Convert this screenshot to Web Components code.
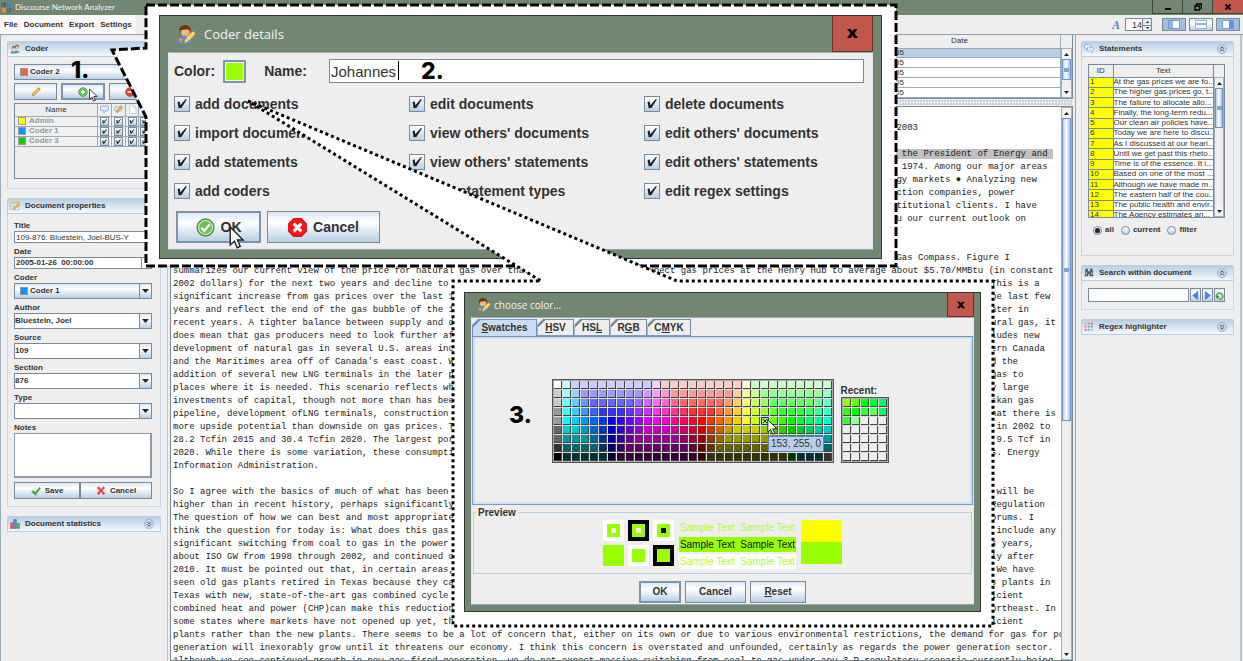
<!DOCTYPE html>
<html lang="en">
<head>
<meta charset="utf-8">
<title>Discourse Network Analyzer</title>
<style>
html, body { margin: 0; height: 100%; overflow: hidden; }
body { font: 8px/10px "Liberation Sans", Arial, sans-serif; color: #333; background: #eee; }
</style>
</head>
<body>
<dna-app></dna-app>

<script>
const BASE = `
  *, *::before, *::after { box-sizing: border-box; }
  button, input, select, textarea { font: inherit; color: inherit; margin: 0; border-radius: 0; outline: none; }
  svg { display: block; flex: none; }
  input[type=checkbox] { appearance: none; flex: none; position: relative; border: 1px solid #7a8a99; background: linear-gradient(#fff, #b8cfe5); }
  input[type=checkbox]:checked::before { content: ""; position: absolute; inset: 0; background: #222;
    clip-path: polygon(18% 40%, 34% 36%, 38% 62%, 76% 20%, 86% 20%, 46% 82%, 26% 84%); }
`;

function define(name, css, html, setup) {
  const template = document.createElement("template");
  template.innerHTML = `<style>${BASE}${css}</style>${html}`;
  customElements.define(name, class extends HTMLElement {
    constructor() {
      super();
      this.attachShadow({ mode: "open" }).append(template.content.cloneNode(true));
    }
    connectedCallback() { if (setup) setup.call(this, this.shadowRoot); }
  });
}

/* ---------- icons ---------- */
const ICONS = {
  logo: `<rect x="1" y="1" width="6" height="6" fill="#46596a"/><rect x="9" y="1" width="6" height="6" fill="#2f7fd0"/><rect x="1" y="9" width="6" height="6" fill="#f08a1c"/><rect x="9" y="9" width="6" height="6" fill="#55606b"/><path d="M3 2v4M11 3h3M10 10l4 4M3 12h3" stroke="#8fa6b8"/>`,
  people: `<circle cx="11" cy="4" r="3" fill="#8a5a2b"/><circle cx="11" cy="5" r="2" fill="#f3c592"/><path d="M7 14c0-5 8-5 8 0z" fill="#5fae4b"/><circle cx="6" cy="6" r="3" fill="#7a4a20"/><circle cx="6" cy="7.500" r="2.200" fill="#f6cd9d"/><path d="M1 15c0-6 10-6 10 0z" fill="#4d8fd8"/><path d="M5 10l1 4 1.500-4z" fill="#fff"/>`,
  coder: `<path d="M2 4c0-5 9-5 10 0l-1 3H3z" fill="#7b4317"/><circle cx="7" cy="6" r="3.600" fill="#f4b57e"/><path d="M2 4c2 1 6-1 8 0l1-1c-1-4-8-4-9 1z" fill="#6b3711"/><path d="M1 15c-1-7 10-8 12-2l-2 3H4z" fill="#4a90dd"/><path d="M1 13l3 2 1-3-3-1z" fill="#f08a3c"/><path d="M6 15.500l1.500-5L13.500 5l2.300 2.300L9.500 14z" fill="#f7d879" stroke="#c58a28" stroke-width=".8"/><path d="M6 15.500l1.500-5 2 3z" fill="#fff0d0" stroke="#a86c20" stroke-width=".5"/>`,
  pencil: `<path d="M2 14l1.500-5L12 1l3 3-8.500 8z" fill="#f8c34a" stroke="#c97f1c"/><path d="M2 14l1.500-5 3 3z" fill="#fbe6c0" stroke="#a0671c" stroke-width=".7"/><path d="M12 1l3 3-1.500 1.500-3-3z" fill="#e79a5a"/>`,
  add: `<circle cx="8" cy="8" r="7" fill="#4fae46" stroke="#2f8a33"/><circle cx="8" cy="8" r="5.600" fill="none" stroke="#a9dca0"/><path d="M8 4.500v7M4.500 8h7" stroke="#fff" stroke-width="2.200"/>`,
  remove: `<circle cx="8" cy="8" r="7" fill="#e0413a" stroke="#b52a24"/><path d="M4 8h8" stroke="#fff" stroke-width="2.400"/>`,
  bubble: `<path d="M3 2h10q2 0 2 2v4q0 2-2 2h-3l-3 4v-4H3q-2 0-2-2V4q0-2 2-2z" fill="#e3effc" stroke="#6d9fd8" stroke-width="1.400"/>`,
  bubbles: `<path d="M2 1h7q1.500 0 1.500 1.500v3Q10.500 7 9 7H6L4 10V7H2Q1 7 1 5.500v-3Q1 1 2 1z" fill="#f4f9ff" stroke="#6d9fd8"/><path d="M7 5h6q2 0 2 1.500v3q0 1.500-2 1.500v3l-3-3H7q-1.500 0-1.500-1.500v-3Q5.500 5 7 5z" fill="#e3effc" stroke="#6d9fd8"/>`,
  bubbleEdit: `<path d="M3 3h9q2 0 2 2v4q0 2-2 2H9l-3 3v-3H3q-2 0-2-2V5q0-2 2-2z" fill="#e3effc" stroke="#6d9fd8" stroke-width="1.200"/><path d="M4 13l1-4 8-8 2.500 2.500-8 8z" fill="#f5ae3d" stroke="#b9771c" stroke-width=".8"/>`,
  page: `<path d="M3 1h7l4 4v10H3z" fill="#fff" stroke="#b4b4b4"/><path d="M10 1v4h4" fill="#eee" stroke="#b4b4b4"/>`,
  note: `<path d="M1 2h13v12H1z" fill="#f4f8fb" stroke="#8fa9bf"/><path d="M1 2h13v3H1z" fill="#f2c24f"/><path d="M3 7h8M3 9h6M3 11h5" stroke="#9ab4c9"/><path d="M6 13l1-3 7-6 1.500 2-7 6z" fill="#f5b53d" stroke="#b47c1c" stroke-width=".7"/>`,
  bars: `<path d="M1 6h4v9H1z" fill="#f05d63" stroke="#c93a42"/><path d="M6 1h4v14H6z" fill="#5a92e8" stroke="#2d62b8"/><path d="M11 7h4v8h-4z" fill="#62b562" stroke="#3b8a3f"/>`,
  binoculars: `<path d="M2 3h4v2h4V3h4l1 10H9V9H7v4H1z" fill="#4d5357"/><path d="M3 1h3v2H3zM10 1h3v2h-3z" fill="#2d3133"/><path d="M3 6h2v5H2zM11 6h2l1 5h-2z" fill="#a8b2b8"/>`,
  dots: `<path d="M1 1h3v3H1z" fill="#e6b53c"/><path d="M6 1h3v3H6z" fill="#f07c7c"/><path d="M11 1h3v3h-3z" fill="#ef5b5b"/><path d="M1 6h3v3H1z" fill="#f07c9c"/><path d="M6 6h3v3H6z" fill="#6cc16c"/><path d="M11 6h3v3h-3z" fill="#4dbd7c"/><path d="M1 11h3v3H1z" fill="#ee5b5b"/><path d="M6 11h3v3H6z" fill="#62a3ee"/><path d="M11 11h3v3h-3z" fill="#c79bea"/>`,
  tick: `<path d="M1 9l3-2 3 3 7-8 1 2-8 11z" fill="#4fae46" stroke="#2f8a33" stroke-width=".8"/>`,
  cross: `<path d="M2 3l2-2 4 4 4-4 2 2-4 4 4 5-2 2-4-5-4 5-2-2 4-5z" fill="#f04848" stroke="#c92a2a" stroke-width=".8"/>`,
  accept: `<circle cx="8" cy="8" r="7.300" fill="#4ea545" stroke="#3c9038" stroke-width=".8"/><circle cx="8" cy="8" r="5.900" fill="#6dbd5e" stroke="#d6f0cf" stroke-width=".9"/><path d="M4.500 8.200l2.500 2.600 4.500-5.300" fill="none" stroke="#fff" stroke-width="1.900"/>`,
  stop: `<path d="M4.800.6h6.400l4.200 4.200v6.400l-4.200 4.200H4.800L.6 11.200V4.800z" fill="#fb1616" stroke="#e00d0d"/><path d="M4.800 4.800l6.400 6.400M11.200 4.800l-6.400 6.400" stroke="#fff" stroke-width="2.600"/>`,
  prev: `<path d="M12 1v14L3 8z" fill="#3f83e6" stroke="#2a63c0"/>`,
  next: `<path d="M4 1v14l9-7z" fill="#3f83e6" stroke="#2a63c0"/>`,
  refresh: `<path d="M3 11a5.500 5.500 0 1 1 4 3.500" fill="none" stroke="#58b04c" stroke-width="3"/><path d="M1 8l7 1-4 6z" fill="#3f9438"/>`,
  down: `<circle cx="8" cy="8" r="7.300" fill="#c3d6ea" stroke="#8da3ba"/><path d="M5 4.500l3 3 3-3M5 8.500l3 3 3-3" fill="none" stroke="#333" stroke-width="1.400"/>`,
  up: `<circle cx="8" cy="8" r="7.300" fill="#c3d6ea" stroke="#8da3ba"/><path d="M5 7.500l3-3 3 3M5 11.500l3-3 3 3" fill="none" stroke="#333" stroke-width="1.400"/>`,
};
define("ui-icon", `:host { display: block; flex: none; width: 10px; height: 10px; } svg { width: 100%; height: 100%; }`,
  `<svg viewBox="0 0 16 16"></svg>`,
  function (root) { root.querySelector("svg").innerHTML = ICONS[this.getAttribute("name")]; });

/* ---------- small controls ---------- */
define("ui-button", `
  :host { display: flex; }
  button { flex: 1; display: flex; align-items: center; justify-content: center; gap: var(--gap, 4px); padding: 0; min-width: 0;
    border: 1px solid #7a8a99; background: linear-gradient(#dde8f3, #fff 35%, #b8cfe5); font-weight: bold; }
  :host([focus]) button { border-width: 2px; border-color: #7d94b0; }
`, `<button type="button"><slot></slot></button>`,
  function (root) { if (this.title) root.querySelector("button").setAttribute("aria-label", this.title); });

define("ui-combo", `
  :host { display: flex; flex-direction: column; }
  label { font-weight: bold; line-height: 10px; }
  .box { display: flex; align-items: center; height: 16px; border: 1px solid #7a8a99; background: #fff; }
  :host([color]) .box { background: linear-gradient(#dde8f3, #fff 35%, #b8cfe5); }
  i { display: none; width: 8px; height: 8px; margin-left: 5px; background: var(--c); border: 1px solid #8899a8; }
  :host([color]) i { display: block; }
  select { flex: 1; min-width: 0; height: 100%; appearance: none; border: 0; padding: 0; background: none; font-weight: bold; }
  :host([color]) select { padding-left: 2px; }
  .arrow { width: 12px; height: 100%; border-left: 1px solid #7a8a99; background: linear-gradient(#dde8f3, #fff 35%, #b8cfe5); display: grid; place-items: center; }
`, `<label for="s"></label><div class="box"><i></i><select id="s"><option></option></select>
   <span class="arrow"><svg width="7" height="4"><path d="M0 0h7L3.500 4z" fill="#222"/></svg></span></div>`,
  function (root) {
    const label = root.querySelector("label");
    if (this.hasAttribute("label")) label.textContent = this.getAttribute("label"); else label.remove();
    root.querySelector("option").textContent = this.getAttribute("value") || "";
    if (!label.isConnected) root.querySelector("select").setAttribute("aria-label", "Active coder");
    if (this.hasAttribute("color")) this.style.setProperty("--c", this.getAttribute("color"));
  });

define("ui-scrollbar", `
  :host { display: flex; flex-direction: column; width: 11px; border: 1px solid #9fb0c0; background: #eee; }
  .b { height: 10px; flex: none; display: grid; place-items: center; background: #f2f2f2; }
  .t { flex: none; height: var(--thumb, 20px); border: 1px solid #6f93c8; background: linear-gradient(90deg, #b8cfe5, #fff 45%, #a9c4e4); display: grid; place-items: center; }
  .t i { width: 5px; height: 4px; background: #7ea4d8; }
  .s { flex: 1; }
`, `<div class="b"><svg width="5" height="3"><path d="M0 3h5L2.500 0z" fill="#222"/></svg></div>
   <div class="t"><i></i></div><div class="s"></div>
   <div class="b"><svg width="5" height="3"><path d="M0 0h5L2.500 3z" fill="#222"/></svg></div>`);

define("task-pane", `
  :host { display: block; }
  header { display: flex; align-items: center; gap: 5px; height: 16px; padding: 0 6px 0 2px; border: 1px solid #b8cfe5;
    background: linear-gradient(#b8cfe5, #f4f8fb); border-radius: 2px 2px 0 0; font-weight: bold; }
  h2 { flex: 1; margin: 0; font-size: 8px; }
  .body { border: 1px solid #c6d8ea; border-top: 0; padding: 7px 8px 7px 6px; }
  :host([closed]) .body { display: none; }
`, `<header><span class="i"></span><h2></h2><span class="t"></span></header><div class="body"><slot></slot></div>`,
  function (root) {
    root.querySelector("h2").textContent = this.getAttribute("heading");
    root.querySelector(".i").innerHTML = `<ui-icon name="${this.getAttribute("icon")}"></ui-icon>`;
    root.querySelector(".t").innerHTML = `<ui-icon name="${this.hasAttribute("closed") ? "down" : "up"}"></ui-icon>`;
  });

/* ---------- frame of the main window ---------- */
define("title-bar", `
  :host { display: flex; align-items: stretch; height: 15px; background: #718771; color: #f4f4f4; font: 8px/15px Lato, "Open Sans", sans-serif; }
  ui-icon { width: 11px; height: 11px; margin: 2px 3px 0 1px; }
  h1 { flex: 1; margin: 0; font: inherit; }
  button { width: 30px; height: 14px; padding: 0; border: 1px solid #3c4a3c; border-width: 0 0 1px 1px; background: none; display: grid; place-items: center; }
  button.x { width: 31px; background: #c4574d; }
`, `<ui-icon name="logo"></ui-icon><h1>Discourse Network Analyzer</h1>
   <button aria-label="Minimize"><svg width="8" height="8"><path d="M1 6h6" stroke="#000" stroke-width="2"/></svg></button>
   <button aria-label="Restore"><svg width="8" height="8"><path d="M2.500 2V1h5v4H6M1 3h4.500v4H1z" fill="none" stroke="#000" stroke-width="1.400"/></svg></button>
   <button class="x" aria-label="Close"><svg width="8" height="8"><path d="M1.500 1.500l5 5M6.500 1.500l-5 5" stroke="#000" stroke-width="1.800"/></svg></button>`);

define("tool-bar", `
  :host { display: flex; align-items: center; height: 20px; border-bottom: 1px solid #8fa0b0; font-weight: bold; }
  nav { display: flex; gap: 6px; height: 19px; align-items: center; padding: 0 4px; background: #fafafa; }
  nav a { color: inherit; text-decoration: none; }
  .a { margin-left: auto; font: italic bold 12px/12px "Liberation Serif", serif; color: #4b86d6; padding-right: 5px; }
  .spin { display: flex; width: 27px; height: 13px; border: 1px solid #7a8a99; background: #fff; }
  .spin input { width: 16px; border: 0; padding: 0; background: none; font-size: 9px; text-align: right; font-weight: normal; }
  .spin span { flex: 1; display: grid; grid-template-rows: 1fr 1fr; border-left: 1px solid #7a8a99; background: #e4ecf4; }
  .spin i { display: grid; place-items: center; } .spin i + i { border-top: 1px solid #7a8a99; }
  .views { display: flex; gap: 3px; padding: 0 3px 0 10px; }
  .views button { width: 24px; height: 13px; padding: 0; border: 1px solid #7a8a99; background: #a3bedb; display: grid; place-items: center; }
  .views button.off { background: linear-gradient(#dde8f3, #fff 35%, #b8cfe5); }
`, `<nav><a href="#">File</a><a href="#">Document</a><a href="#">Export</a><a href="#">Settings</a></nav>
   <span class="a">A</span>
   <div class="spin"><input aria-label="Font size" value="14"><span><i><svg width="3" height="2"><path d="M0 2h3L1.500 0z" fill="#222"/></svg></i><i><svg width="3" height="2"><path d="M0 0h3L1.500 2z" fill="#222"/></svg></i></span></div>
   <div class="views">
   <button aria-label="Left panel"><svg width="12" height="9"><path d="M.5.5h11v8H.5z" fill="#fff" stroke="#6c9bd8"/><path d="M1 1h4v7H1z" fill="#8fb4e6"/></svg></button>
   <button class="off" aria-label="Top panel"><svg width="12" height="9"><path d="M.5.5h11v8H.5z" fill="#fff" stroke="#8fb4e6"/><path d="M0 3h12v2H0z" fill="#8fb4e6"/></svg></button>
   <button aria-label="Right panel"><svg width="12" height="9"><path d="M.5.5h11v8H.5z" fill="#fff" stroke="#6c9bd8"/><path d="M7 1h4v7H7z" fill="#5f95e0"/></svg></button>
   </div>`);

/* ---------- left column ---------- */
define("coder-panel", `
  :host { display: flex; flex-direction: column; height: 117px; gap: 3px; padding-bottom: 2px; }
  .row { display: grid; grid-template-columns: repeat(3, 1fr); gap: 4px; }
  .row ui-button { height: 17px; }
  .scroll { flex: 1; overflow: hidden; border: 1px solid #7a8a99; }
  table { width: 100%; border-collapse: collapse; table-layout: fixed; font-weight: bold; color: #999; height: 43px; }
  th { height: 12px; font-weight: normal; color: #333; padding: 0; border: 1px solid #9aabba; border-top: 0; border-left: 0; }
  td { padding: 0; border: 1px solid #9aabba; border-left: 0; background: #f0f0f0; line-height: 8px; }
  td ui-icon, th ui-icon { margin: auto; }
  th ui-icon { width: 9px; height: 9px; }
  .n { display: flex; align-items: center; gap: 3px; padding-left: 3px; }
  .n i { width: 8px; height: 8px; border: 1px solid #999; }
  td input { display: block; width: 9px; height: 9px; margin: auto; }
`, `<ui-combo value="Coder 2" color="#ff5f2e"></ui-combo>
   <div class="row"><ui-button title="Edit coder"><ui-icon name="pencil"></ui-icon></ui-button><ui-button title="Add coder" focus><ui-icon name="add"></ui-icon></ui-button><ui-button title="Remove coder"><ui-icon name="remove"></ui-icon></ui-button></div>
   <div class="scroll"><table><colgroup><col><col style="width:14px"><col style="width:14px"><col style="width:13px"><col style="width:12px"></colgroup>
   <thead><tr><th>Name</th><th><ui-icon name="bubble"></ui-icon></th><th><ui-icon name="bubbleEdit"></ui-icon></th><th><ui-icon name="page"></ui-icon></th><th></th></tr></thead><tbody></tbody></table></div>`,
  root => {
    root.querySelector("tbody").innerHTML = [["Admin", "#ffff00"], ["Coder 1", "#0a96ff"], ["Coder 3", "#1ec800"]].map(([n, c]) =>
      `<tr><td><span class="n"><i style="background:${c}"></i>${n}</span></td>` +
      ["view statements", "edit statements", "view documents", "edit documents"].map(p => `<td><input type="checkbox" checked aria-label="${n}: ${p}"></td>`).join("") + `</tr>`).join("");
  });

define("document-form", `
  :host { display: flex; flex-direction: column; gap: 4px; }
  .f { display: flex; flex-direction: column; }
  label { font-weight: bold; line-height: 10px; }
  input { height: 12px; border: 1px solid #7a8a99; padding: 0 1px; background: #fff; }
  .date { display: flex; border: 1px solid #7a8a99; height: 12px; background: #fff; }
  .date input { flex: 1; min-width: 0; height: 10px; border: 0; font-weight: bold; }
  .date i { width: 10px; border-left: 1px solid #7a8a99; }
  textarea { height: 45px; resize: none; border: 2px solid #8d9aa8; border-width: 1px 2px 2px 1px; background: #fff; padding: 1px; }
  .row { display: grid; grid-template-columns: 66px 1fr; }
  .row ui-button { height: 17px; }
`, `<div class="f"><label for="t">Title</label><input id="t" value="109-876: Bluestein, Joel-BUS-Y"></div>
   <div class="f"><label for="d">Date</label><div class="date"><input id="d" value="2005-01-26  00:00:00"><i></i></div></div>
   <ui-combo label="Coder" value="Coder 1" color="#0a96ff"></ui-combo>
   <ui-combo label="Author" value="Bluestein, Joel"></ui-combo>
   <ui-combo label="Source" value="109"></ui-combo>
   <ui-combo label="Section" value="876"></ui-combo>
   <ui-combo label="Type"></ui-combo>
   <div class="f"><label for="n">Notes</label><textarea id="n"></textarea></div>
   <div class="row"><ui-button><ui-icon name="tick"></ui-icon>Save</ui-button><ui-button><ui-icon name="cross"></ui-icon>Cancel</ui-button></div>`);

/* ---------- centre column ---------- */
define("document-table", `
  :host { display: flex; height: 64px; border: 1px solid #7a8a99; border-top: 0; background: #fff; }
  .w { flex: 1; overflow: hidden; }
  table { width: 100%; height: 63px; border-collapse: collapse; table-layout: fixed; }
  th { height: 13px; padding: 0; font-weight: normal; background: #eee; border-right: 1px solid #9aabba; border-bottom: 1px solid #9aabba; }
  td { padding: 0 0 0 36px; line-height: 8px; border-right: 1px solid #9aabba; border-bottom: 1px solid #9aabba; }
  tr.sel td { background: #b8cfe5; }
  .side { display: flex; flex-direction: column; } .side i { height: 13px; background: #eee; } .side ui-scrollbar { flex: 1; --thumb: 21px; }
`, `<div class="w"><table><colgroup><col><col style="width:202px"></colgroup><thead><tr><th></th><th>Date</th></tr></thead>
   <tbody><tr class="sel"><td></td><td>05</td></tr><tr><td></td><td>05</td></tr><tr><td></td><td>05</td></tr><tr><td></td><td>05</td></tr><tr><td></td><td>05</td></tr></tbody></table></div>
   <div class="side"><i></i><ui-scrollbar></ui-scrollbar></div>`);

/* Each row: the part at the left, then the part at the right and the width of its column. */
const LINES = [
  ["", " 2003", "mid"], [""],
  ["", "n the President of Energy and ", "mid mark"],
  ["", ", 1974. Among our major areas", "mid"],
  ["", "rgy markets ● Analyzing new", "mid"],
  ["", "uction companies, power", "mid"],
  ["", "stitutional clients. I have", "mid"],
  ["", "ou our current outlook on", "mid"],
  [""], [""],
  ["", " Gas Compass. Figure I", "mid"],
  ["summarizes our current view of the price for natural gas over that p", "expect gas prices at the Henry Hub to average about $5.70/MMBtu (in constant", "wide"],
  ["2002 dollars) for the next two years and decline to a", "This is a"],
  ["significant increase from gas prices over the last 15", "he last few"],
  ["years and reflect the end of the gas bubble of the 199", "ater in"],
  ["recent years. A tighter balance between supply and dem", "ural gas, it"],
  ["does mean that gas producers need to look further afie", "ludes new"],
  ["development of natural gas in several U.S. areas inclu", "ern Canada"],
  ["and the Maritimes area off of Canada's east coast. We", "d the"],
  ["addition of several new LNG terminals in the later par", "gas to"],
  ["places where it is needed. This scenario reflects what", "y large"],
  ["investments of capital, though not more than has been", "skan gas"],
  ["pipeline, development ofLNG terminals, construction of", "hat there is"],
  ["more upside potential than downside on gas prices. Thi", " in 2002 to"],
  ["28.2 Tcfin 2015 and 30.4 Tcfin 2020. The largest porti", " 9.5 Tcf in"],
  ["2020. While there is some variation, these consumption", "s. Energy"],
  ["Information Administration."], [""],
  ["So I agree with the basics of much of what has been sa", " will be"],
  ["higher than in recent history, perhaps significantly h", "Regulation"],
  ["The question of how we can best and most appropriately", "orums. I"],
  ["think the question for today is: What does this gas pr", " include any"],
  ["significant switching from coal to gas in the power ge", "s years,"],
  ["about ISO GW from 1998 through 2002, and continued con", "ly after"],
  ["2010. It must be pointed out that, in certain areas, t", " We have"],
  ["seen old gas plants retired in Texas because they cann", "s plants in"],
  ["Texas with new, state-of-the-art gas combined cycle pl", "icient"],
  ["combined heat and power (CHP)can make this reduction e", "ortheast. In"],
  ["some states where markets have not opened up yet, this", "icient"],
  ["plants rather than the new plants. There seems to be a lot of concern that, either on its own or due to various environmental restrictions, the demand for gas for power"],
  ["generation will inexorably grow until it threatens our economy. I think this concern is overstated and unfounded, certainly as regards the power generation sector."],
  ["Although we see continued growth in new gas-fired generation, we do not expect massive switching from coal to gas under any 3-P regulatory scenario currently being"],
];
define("document-text", `
  :host { display: flex; min-height: 0; border: 1px solid #7a8a99; background: #fff; }
  .page { flex: 1; min-width: 0; overflow: hidden; padding: 15px 0 0 2px; color: #222; font: 9px/13px "Liberation Mono", "Courier New", monospace; white-space: pre; }
  .line { display: flex; justify-content: space-between; height: 13px; }
  .right { flex: none; width: 70px; }
  .mid { width: 170px; }
  .wide { width: 418px; }
  mark { background: #c0c0c0; color: inherit; }
  ui-scrollbar { --thumb: 303px; }
`, `<div class="page"></div><ui-scrollbar></ui-scrollbar>`,
  root => {
    root.querySelector(".page").innerHTML = LINES.map(([left, right, kind = ""]) => {
      const text = kind.includes("mark") ? `<mark>${right}</mark>` : right;
      return `<div class="line">` + (left || right ? `<span>${left}</span>` : "") + (right ? `<span class="right ${kind}">${text}</span>` : "") + `</div>`;
    }).join("");
  });

/* ---------- right column ---------- */
define("statement-panel", `
  :host { display: block; height: 184px; }
  .box { display: flex; height: 154px; border: 1px solid #7a8a99; overflow: hidden; background: #fff; }
  .w { flex: 1; overflow: hidden; }
  table { width: 100%; height: 156px; border-collapse: collapse; table-layout: fixed; }
  th { height: 12px; padding: 0; font-weight: normal; background: #eee; border-right: 1px solid #7a8a99; border-bottom: 1px solid #7a8a99; }
  td { padding: 0; line-height: 8px; white-space: nowrap; overflow: hidden; border-right: 1px solid #7a8a99; border-bottom: 1px solid #7a8a99; }
  td:first-child { background: #ff0; padding-left: 1px; }
  .side { display: flex; flex-direction: column; } .side i { height: 12px; background: #eee; } .side ui-scrollbar { flex: 1; width: 10px; --thumb: 40px; }
  form { display: flex; gap: 7px; padding: 7px 0 0 5px; font-weight: bold; }
  label { display: flex; align-items: center; gap: 3px; }
  input { appearance: none; width: 9px; height: 9px; border: 1px solid #7a8a99; border-radius: 50%; background: linear-gradient(#fff, #b8cfe5); display: grid; place-items: center; }
  input:checked::before { content: ""; width: 5px; height: 5px; border-radius: 50%; background: #222; }
`, `<div class="box"><div class="w"><table><colgroup><col style="width:24px"><col></colgroup><thead><tr><th>ID</th><th>Text</th></tr></thead><tbody></tbody></table></div>
   <div class="side"><i></i><ui-scrollbar></ui-scrollbar></div></div>
   <form><label><input type="radio" name="show" checked>all</label><label><input type="radio" name="show">current</label><label><input type="radio" name="show">filter</label></form>`,
  root => {
    root.querySelector("tbody").innerHTML = ["At the gas prices we are fo...", "The higher gas prices go, t...", "The failure to allocate allo...", "Finally, the long-term redu...", "Our clean air policies have...", "Today we are here to discu...", "As I discussed at our heari...", "Until we get past this rheto...", "Time is of the essence. It i...", "Based on one of the most ...", "Although we have made m...", "The eastern half of the cou...", "The public health and envir...", "The Agency estimates an..."]
      .map((t, i) => `<tr><td>${i + 1}</td><td>${t}</td></tr>`).join("");
  });

define("search-panel", `
  :host { display: flex; height: 14px; gap: 1px; }
  input { flex: 1; min-width: 0; border: 1px solid #7a8a99; background: #fff; padding: 0 1px; }
  ui-button { width: 11px; } ui-icon { width: 9px; height: 9px; }
`, `<input aria-label="Search within document"><ui-button title="Previous"><ui-icon name="prev"></ui-icon></ui-button><ui-button title="Next"><ui-icon name="next"></ui-icon></ui-button><ui-button title="Restart"><ui-icon name="refresh"></ui-icon></ui-button>`);

/* ---------- dialog windows ---------- */
define("dialog-window", `
  :host { position: absolute; display: flex; flex-direction: column; border: 1px solid #333; background: #718771; padding: 0 8px 8px; }
  header { display: flex; align-items: center; flex: none; height: var(--bar, 36px); color: #f4f4f4; font-family: "Open Sans", "Noto Sans", sans-serif; }
  h2 { flex: 1; margin: 0 0 0 var(--tgap, 8px); font-weight: normal; font-size: var(--title, 13px); }
  ui-icon { width: var(--icon, 20px); height: var(--icon, 20px); margin-left: var(--ileft, 9px); }
  button { align-self: stretch; width: var(--close, 41px); border: 1px solid #6b2f2a; border-top: 0; background: #c4574d; padding: 0; display: grid; place-items: center; }
  section { flex: 1; min-height: 0; background: #eee; border: 1px solid #dfe6ee; border-top-color: #9fb0a8; border-bottom-color: #8fa5b5; display: flex; flex-direction: column; }
  svg { width: var(--x, 11px); height: var(--x, 11px); }
`, `<header><ui-icon name="coder"></ui-icon><h2></h2><button aria-label="Close"><svg viewBox="0 0 10 10"><path d="M0 1h3.500L5 3 6.500 1H9.500L6.800 4.800 10 9H6.500L5 6.800 3.500 9H0L3.200 4.800z" fill="#000"/></svg></button></header><section><slot></slot></section>`,
  function (root) { root.querySelector("h2").textContent = this.getAttribute("heading"); });

define("coder-details", `
  :host { display: block; padding: 6px 8px 5px 5px; font-size: 14px; line-height: 16px; font-weight: bold; }
  .top { display: flex; align-items: center; height: 24px; }
  .top > * + * { margin-left: 8px; }
  .color { width: 23px; height: 23px; padding: 0; border: 2px solid #7d94b0; background: #9f0; box-shadow: inset 0 0 0 1px #fff; }
  .top .name { margin-left: 18px; }
  .top input { flex: 1; height: 24px; margin-left: 22px; padding: 0 1px; border: 1px solid #7a8a99; background: #fff; font-size: 15px; font-weight: normal; }
  .field { flex: 1; position: relative; display: flex; }
  .perms { display: grid; grid-template-columns: repeat(3, 235px); grid-auto-rows: 29px; margin-top: 6px; }
  .perms label { display: flex; align-items: center; gap: 5px; }
  .perms input { width: 16px; height: 16px; }
  .act { display: flex; gap: 6px; margin: 6px 0 0 2px; --gap: 6px; }
  .act ui-button { height: 32px; width: 85px; } .act ui-button + ui-button { width: 113px; }
  .act ui-icon { width: 19px; height: 19px; }
`, `<div class="top"><span>Color:</span><button class="color" aria-label="Choose color"></button><label class="name" for="n">Name:</label><input id="n" value="Johannes"></div>
   <div class="perms"></div>
   <div class="act"><ui-button focus><ui-icon name="accept"></ui-icon>OK</ui-button><ui-button><ui-icon name="stop"></ui-icon>Cancel</ui-button></div>`,
  root => {
    root.querySelector(".perms").innerHTML = ["add documents", "edit documents", "delete documents", "import documents", "view others' documents", "edit others' documents", "add statements", "view others' statements", "edit others' statements", "add coders", "edit statement types", "edit regex settings"]
      .map(t => `<label><input type="checkbox" checked>${t}</label>`).join("");
  });

/* Palette rows: three-digit hex colours, "*n" repeats one n times. */
const PALETTE = [
  "fff cff ccf*9 fcf fcc*9 ffc cfc*9",
  "ccc 9ff 9cf 99f*7 c9f f9f f9c f99*7 fc9 ff9 cf9 9f9*7 9fc",
  "ccc 6ff 6cf 69f 66f*5 96f c6f f6f f6c f69 f66*5 f96 fc6 ff6 cf6 9f6 6f6*5 6f9 6fc",
  "999 3ff 3cf 39f 36f 33f*3 63f 93f c3f f3f f3c f39 f36 f33*3 f63 f93 fc3 ff3 cf3 9f3 6f3 3f3*3 3f6 3f9 3fc",
  "999 0ff 0cf 09f 06f 03f 00f 30f 60f 90f c0f f0f f0c f09 f06 f03 f00 f30 f60 f90 fc0 ff0 cf0 9f0 6f0 3f0 0f0 0f3 0f6 0f9 0fc",
  "666 0cc*2 09c 06c 03c 00c 30c 60c 90c c0c*3 c09 c06 c03 c00 c30 c60 c90 cc0*3 9c0 6c0 3c0 0c0 0c3 0c6 0c9 0cc",
  "666 099*3 069 039 009 309 609 909*5 906 903 900 930 960 990*5 690 390 090 093 096 099*2",
  "333 066*4 036 006 306 606*7 603 600 630 660*7 360 060 063 066*3",
  "000 033*5 003 303*9 300 330*9 030 033*3 333",
].flatMap(r => r.split(" ").flatMap(c => Array(+(c.split("*")[1] || 1)).fill("#" + c.slice(0, 3))));
const RECENT = ["9f0", "6f0", "0f0", "0f3", "0f6", "3f0", "0f0", "3f3", "6f6", "0f6", "3f3", "9f9"].map(c => "#" + c);

define("swatch-grid", `
  :host { display: grid; gap: 1px; padding: 1px; background: #ddd; border: 1px solid #555; outline: 1px solid #aaa; outline-offset: -2px; }
  i { width: 8px; height: 8px; border: 1px solid #444; border-width: 0 1px 1px 0; }
  svg { width: 8px; height: 8px; }
`, ``, function (root) {
    const recent = this.hasAttribute("recent"), cols = recent ? 5 : 31;
    this.style.gridTemplateColumns = `repeat(${cols}, 8px)`;
    const colors = recent ? [...RECENT, ...Array(23).fill("#eee")] : PALETTE;
    const box = document.createElement("template");
    box.innerHTML = colors.map((c, n) => !recent && n === 147
      ? `<svg viewBox="0 0 8 8"><path d="M0 0h8v8H0z" fill="${c}"/><path d="M.5.5h7v7h-7zM2 2l4 4M6 2L2 6" fill="none" stroke="#22c"/></svg>`
      : `<i style="background:${c}"></i>`).join("");
    root.append(box.content);
  });

define("color-preview", `
  fieldset { display: flex; justify-content: center; gap: 5px; margin: 0; padding: 0 0 3px; height: 68px; border: 1px solid #b8cfe5; font-size: 10px; }
  legend { margin-left: 2px; padding: 0 2px; font-weight: bold; line-height: 14px; height: 12px; }
  .sq { display: grid; grid-template-columns: repeat(3, 21px); grid-auto-rows: 21px; gap: 4px; align-content: start; }
  .sq span { display: grid; place-items: center; background: #fff; }
  .sq i { width: 13px; height: 13px; background: #9f0; display: grid; place-items: center; }
  .sq b { width: 5px; height: 5px; background: #fff; }
  .txt { display: flex; flex-direction: column; gap: 2px; white-space: pre; line-height: 15px; color: #adff2f; }
  .txt span { padding: 0 1px; }
  .two { display: grid; grid-template-rows: 22px 22px; width: 41px; }
  fieldset > div { margin-top: 2px; }
  .k { background: #000 !important; } .g { background: #9f0 !important; }
`, `<fieldset><legend>Preview</legend>
   <div class="sq"><span><i><b></b></i></span><span class="k"><i><b></b></i></span><span><i><b class="k"></b></i></span><span class="g"></span><span><i></i></span><span class="k"><i></i></span></div>
   <div class="txt"><span>Sample Text  Sample Text</span><span style="background:#9f0;color:#111">Sample Text  Sample Text</span><span style="background:#fff">Sample Text  Sample Text</span></div>
   <div class="two"><i style="background:#ff0"></i><i style="background:#9f0"></i></div></fieldset>`);

define("color-chooser", `
  :host { display: flex; flex-direction: column; height: 100%; font-size: 10px; line-height: 12px; padding-top: 1px; }
  [role=tablist] { display: flex; height: 17px; }
  [role=tab] { height: 17px; padding: 0; border: 1px solid #7a8a99; border-left-color: #9db4cc; border-bottom-color: #7a9cc8; background: linear-gradient(135deg, #7a8a99 5px, #eee 5px); font-weight: bold; clip-path: polygon(6px 0, 100% 0, 100% 100%, 0 100%, 0 6px); }
  [role=tab].on { background: linear-gradient(135deg, #6f93c8 5px, #c8ddf2 5px); border-bottom: 0; border-color: #6f93c8; }
  .panel { display: flex; justify-content: center; align-items: flex-end; gap: 7px; height: 169px; padding: 0 5px 41px 0; border: 1px solid #7a9cc8; border-top-color: #6f93c8; box-shadow: inset 0 0 0 2px #d3e1f0; }
  .recent { font-weight: bold; }
  color-preview { margin: 1px 1px 0; }
  .act { display: flex; justify-content: center; gap: 4px; margin-top: 7px; }
  .act ui-button { height: 22px; width: 61px; } .act ui-button:first-child { width: 42px; } .act ui-button:last-child { width: 56px; }
`, `<div role="tablist"><button role="tab" class="on" style="width:65px"><u>S</u>watches</button><button role="tab" style="width:37px"><u>H</u>SV</button><button role="tab" style="width:36px">HS<u>L</u></button><button role="tab" style="width:37px">R<u>G</u>B</button><button role="tab" style="width:44px">C<u>M</u>YK</button></div>
   <div class="panel" role="tabpanel"><swatch-grid></swatch-grid><div class="recent">Recent:<swatch-grid recent></swatch-grid></div></div>
   <color-preview></color-preview>
   <div class="act"><ui-button focus>OK</ui-button><ui-button>Cancel</ui-button><ui-button><span><u>R</u>eset</span></ui-button></div>`);

define("step-label", `:host { position: absolute; font: 800 23px/24px Inter, "Liberation Sans", sans-serif; color: #000; }`, `<slot></slot>`);
define("text-caret", `:host { position: absolute; width: 1px; height: 19px; background: #000; }`, ``);
define("mouse-pointer", `:host { position: absolute; width: 12px; height: 18px; } svg { width: 100%; height: 100%; }`,
  `<svg viewBox="0 0 12 18"><path d="M.7.8v14l3.300-3 2.200 5.200 2.300-1-2.200-5h4.500z" fill="#fff" stroke="#222" stroke-width="1.100"/></svg>`);
define("callout-shape", `:host { position: absolute; inset: 0; pointer-events: none; } svg { width: 100%; height: 100%; } path { fill: #fff; stroke: #000; stroke-width: 3; }`,
  `<svg><path></path></svg>`, function (root) {
    const p = root.querySelector("path");
    p.setAttribute("d", this.getAttribute("d"));
    p.setAttribute("stroke-dasharray", this.getAttribute("dash"));
  });

define("dna-app", `
  :host { position: relative; display: grid; grid-template-rows: auto auto minmax(0, 1fr); height: 100vh; overflow: hidden; }
  main { display: grid; grid-template-columns: 170px minmax(0, 1fr) 170px; min-height: 0; }
  aside { display: flex; flex-direction: column; gap: 9px; padding: 6px 9px 0 6px; border-left: 1px solid #9aabba; }
  .left { border-right: 1px solid #b8c4d0; margin-right: 2px; padding-right: 6px; }
  .right { border-right: 2px solid #b8c4d0; margin: 0 1px 0 2px; padding: 6px 6px 0 5px; }
  .centre { display: flex; flex-direction: column; min-height: 0; min-width: 0; }
  .split { flex: none; height: 7px; background: radial-gradient(circle at 1px 1px, #c4ccd4 1px, transparent 1px) 0 1px / 3px 3px #eee; }
  document-text { flex: 1; }
  .w1 { left: 159px; top: 15px; width: 723px; height: 244px; --icon: 19px; }
  .w2 { left: 464px; top: 292px; width: 517px; height: 320px; padding: 0 6px 6px; --bar: 24px; --icon: 14px; --ileft: 6px; --tgap: 3px; --title: 10px; --close: 27px; --x: 8px; }
  .tip { position: absolute; left: 768px; top: 436px; padding: 0 2px; border: 1px solid #6382bf; background: #b8cfe5; font-size: 10px; line-height: 14px; }
`, `<title-bar></title-bar><tool-bar></tool-bar>
   <main>
     <aside class="left">
       <task-pane heading="Coder" icon="people"><coder-panel></coder-panel></task-pane>
       <task-pane heading="Document properties" icon="note"><document-form></document-form></task-pane>
       <task-pane heading="Document statistics" icon="bars" closed></task-pane>
     </aside>
     <div class="centre"><document-table></document-table><div class="split"></div><document-text></document-text></div>
     <aside class="right">
       <task-pane heading="Statements" icon="bubbles"><statement-panel></statement-panel></task-pane>
       <task-pane heading="Search within document" icon="binoculars"><search-panel></search-panel></task-pane>
       <task-pane heading="Regex highlighter" icon="dots" closed></task-pane>
     </aside>
   </main>
   <callout-shape d="M146 5H896V266H146V117L112 50L146 48Z" dash="9 3"></callout-shape>
   <dialog-window class="w1" heading="Coder details"><coder-details></coder-details></dialog-window>
   <text-caret style="left:398px;top:61px"></text-caret>
   <callout-shape d="M248 101L677 281H993V626H453V281H541Z" dash="3 3"></callout-shape>
   <dialog-window class="w2" heading="choose color..."><color-chooser></color-chooser></dialog-window>
   <output class="tip">153, 255, 0</output>
   <step-label style="left:71px;top:58px">1.</step-label>
   <step-label style="left:421px;top:59px">2.</step-label>
   <step-label style="left:509px;top:403px">3.</step-label>
   <mouse-pointer style="left:89px;top:88px;width:9px;height:14px"></mouse-pointer>
   <mouse-pointer style="left:229px;top:226px;width:16px;height:23px"></mouse-pointer>
   <mouse-pointer style="left:767px;top:419px;width:11px;height:16px"></mouse-pointer>`);
</script>
</body>
</html>
